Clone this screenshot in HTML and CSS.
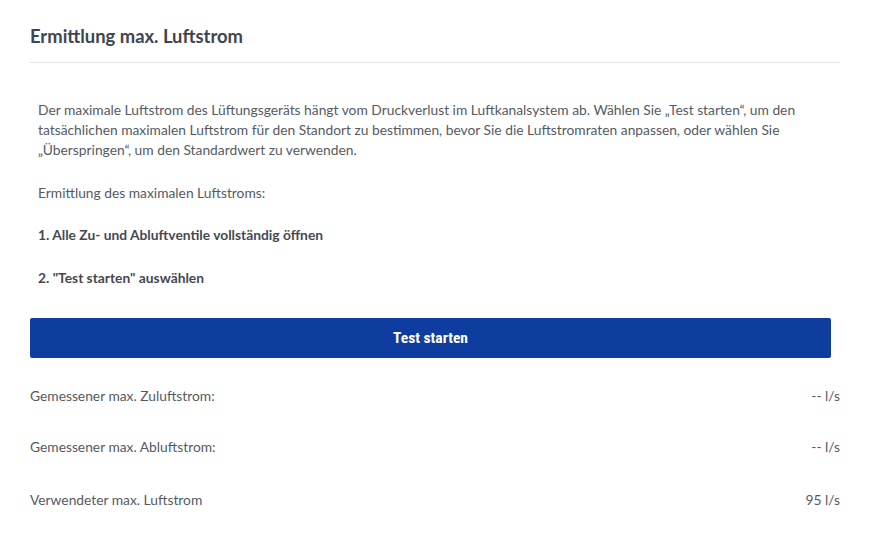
FILE: index.html
```html
<!DOCTYPE html>
<html lang="de">
<head>
<meta charset="utf-8">
<link rel="stylesheet" href="styles.css">
</head>
<body>
<div class="panel">
  <div class="header"><h2 class="title">Ermittlung max. Luftstrom</h2></div>
  <div class="intro">
    <p class="text lead">Der maximale Luftstrom des Lüftungsgeräts hängt vom Druckverlust im Luftkanalsystem ab. Wählen Sie „Test starten“, um den tatsächlichen maximalen Luftstrom für den Standort zu bestimmen, bevor Sie die Luftstromraten anpassen, oder wählen Sie „Überspringen“, um den Standardwert zu verwenden.</p>
    <p class="text">Ermittlung des maximalen Luftstroms:</p>
    <p class="text strong">1. Alle Zu- und Abluftventile vollständig öffnen</p>
    <p class="text strong">2. "Test starten" auswählen</p>
  </div>
  <div class="actions"><button class="btn">Test starten</button></div>
  <div class="rows">
    <div class="row">
      <span>Gemessener max. Zuluftstrom:</span><span>-- l/s</span>
    </div>
    <div class="row">
      <span>Gemessener max. Abluftstrom:</span><span>-- l/s</span>
    </div>
    <div class="row">
      <span>Verwendeter max. Luftstrom</span><span>95 l/s</span>
    </div>
  </div>
</div>
</body>
</html>
```
FILE: styles.css
```css
html, body { margin: 0; padding: 0; background: #fff; }
body { font-family: "Lato", "Liberation Sans", sans-serif; color: #555a62; }
.panel { padding: 0 29px 0 30px; }
.header { height: 63px; border-bottom: 1px solid #e6e6e6; box-sizing: border-box; padding-top: 25px; }
.title { margin: 0; font-size: 18.4px; line-height: 22px; font-weight: 700; color: #3e4451; }
.intro { padding: 37px 8px 0 8px; }
.text { margin: 0 0 22px 0; font-size: 13.8px; line-height: 20px; }
.text.lead { margin-bottom: 23px; }
.text.strong { font-weight: 700; color: #45494f; margin-bottom: 23px; }
.actions { padding-top: 7px; padding-right: 9px; }
.btn { display: block; width: 100%; height: 40px; border: 0; border-radius: 2px; background: #0f3d9f; color: #fff; font-family: "Liberation Sans Narrow", "Roboto Condensed", "Liberation Sans", sans-serif; font-weight: 700; font-size: 15.5px; }
.rows { padding-top: 28px; }
.row { display: flex; justify-content: space-between; font-size: 13.8px; line-height: 20px; height: 51px; }
.row:nth-child(2) { height: 53px; }
```
